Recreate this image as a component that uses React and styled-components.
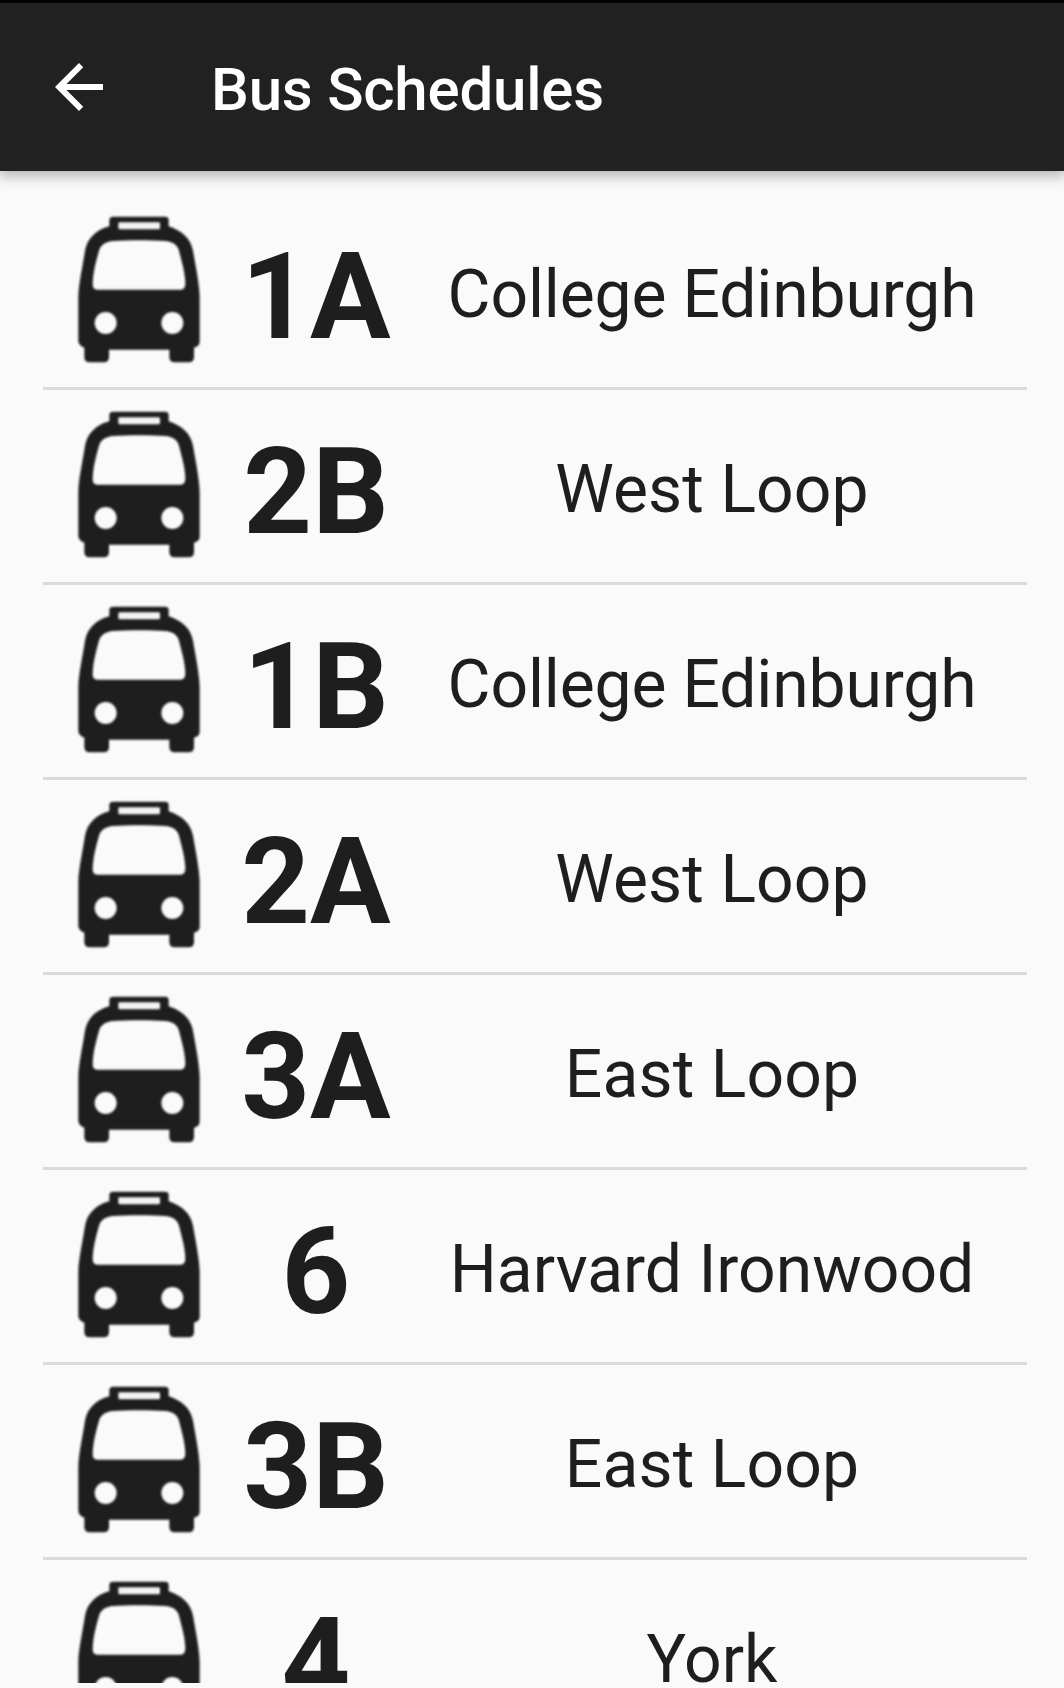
import React from "react";
import styled, { createGlobalStyle } from "styled-components";

const GlobalStyle = createGlobalStyle`
  * { box-sizing: border-box; }
  html, body { margin: 0; padding: 0; background: #fafafa; }
  body { overflow: hidden; }
`;

const Screen = styled.div`
  display: flex;
  flex-direction: column;
  width: 1064px;
  height: 1688px;
  padding-bottom: 5px;
  overflow: hidden;
  background: #fafafa;
  color: #1e1e1e;
  font-family: Roboto, "Liberation Sans", sans-serif;
`;

const AppBar = styled.header`
  display: flex;
  flex: none;
  align-items: center;
  gap: 96px;
  height: 171px;
  padding-left: 43px;
  border-top: 3px solid #000;
  background: #212121;
  color: #fff;
  box-shadow: 0 3px 13px 2px rgba(0, 0, 0, 0.29);
  position: relative;
`;

const BackButton = styled.button`
  display: block;
  width: 72px;
  height: 72px;
  padding: 0;
  border: 0;
  background: none;
  color: inherit;

  svg { display: block; }
`;

const Title = styled.h1`
  margin: 0;
  padding-top: 5px;
  font-size: 60px;
  font-weight: 500;
  line-height: 70px;
  letter-spacing: -0.22px;
  white-space: nowrap;
`;

const RouteList = styled.ul`
  flex: 1;
  min-height: 0;
  margin: 0;
  padding: 24px 37px 0 43px;
  overflow: hidden;
  list-style: none;
`;

const RouteRow = styled.li`
  display: grid;
  grid-template-columns: 192px 162px 630px;
  align-items: center;
  height: 195px;
  border-bottom: 3px solid #dadada;
`;

const BusDrawing = styled.svg`
  display: block;
  width: 192px;
  height: 192px;
  filter: blur(0.9px);
`;

const RouteNumber = styled.span`
  padding-top: 12px;
  font-size: 120px;
  font-weight: 700;
  line-height: 140px;
  text-align: center;
  white-space: nowrap;
`;

const RouteName = styled.span`
  padding-top: 7px;
  font-size: 66px;
  line-height: 78px;
  letter-spacing: ${({ $tracking }) => $tracking}px;
  text-align: center;
  white-space: nowrap;
`;

const routes = [
  { number: "1A", name: "College Edinburgh", tracking: -0.15 },
  { number: "2B", name: "West Loop", tracking: 0.12 },
  { number: "1B", name: "College Edinburgh", tracking: -0.15 },
  { number: "2A", name: "West Loop", tracking: 0.12 },
  { number: "3A", name: "East Loop", tracking: 0.12 },
  { number: "6", name: "Harvard Ironwood", tracking: 0 },
  { number: "3B", name: "East Loop", tracking: 0.12 },
  { number: "4", name: "York", tracking: 0 },
];

function BusIcon() {
  return (
    <BusDrawing viewBox="-51 -15 576 576" aria-hidden="true">
      <path
        fill="#1e1e1e"
        d="M148 79V60Q148 50 160 50H315Q326 50 326 60V79C365 92 392 115 399 152C407 200 418 250 419 290V425Q419 438 402 443V472Q402 487 386 487H344Q328 487 328 472V449H147V472Q147 487 131 487H89Q73 487 73 472V443Q55 436 55 422V290C56 250 68 200 75 152C82 115 108 90 148 79Z"
      />
      <rect x="175" y="67" width="125" height="21" rx="4" fill="#f4f4f4" />
      <path
        fill="#fafafa"
        d="M160 123C200 120 275 120 315 123C338 125 352 134 357 152C365 185 375 215 376 250Q376 269 362 269H112Q98 269 98 253C99 215 108 185 117 152C122 134 138 125 160 123Z"
      />
      <circle cx="137" cy="369" r="33" fill="#fafafa" />
      <circle cx="337" cy="369" r="33" fill="#fafafa" />
    </BusDrawing>
  );
}

export default function App() {
  return (
    <Screen>
      <GlobalStyle />
      <AppBar>
        <BackButton aria-label="Back">
          <svg width="72" height="72" viewBox="0 0 24 24" fill="currentColor">
            <path d="M20 11H7.83l5.59-5.59L12 4l-8 8 8 8 1.41-1.41L7.83 13H20v-2z" />
          </svg>
        </BackButton>
        <Title>Bus Schedules</Title>
      </AppBar>
      <RouteList>
        {routes.map(({ number, name, tracking }) => (
          <RouteRow key={number}>
            <BusIcon />
            <RouteNumber>{number}</RouteNumber>
            <RouteName $tracking={tracking}>{name}</RouteName>
          </RouteRow>
        ))}
      </RouteList>
    </Screen>
  );
}
